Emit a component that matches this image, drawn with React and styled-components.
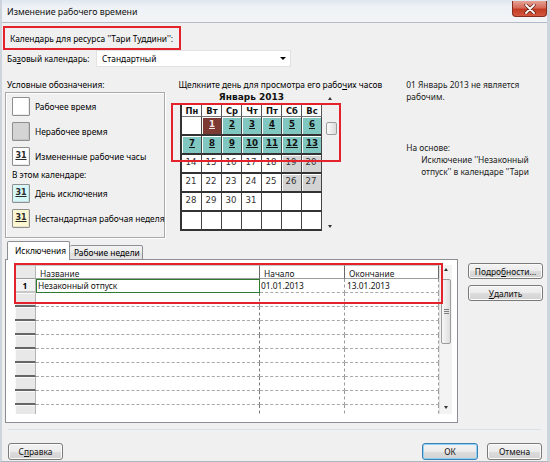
import React from 'react';
import styled, { createGlobalStyle } from 'styled-components';

const GlobalStyle = createGlobalStyle`
  html, body { margin: 0; padding: 0; background: #ffffff; }
  body {
    font-family: "Noto Sans", "Open Sans", sans-serif;
    font-size: 8.4px;
    color: #000;
  }
  #root { width: 550px; height: 462px; }
  * { box-sizing: border-box; }
`;

const Window = styled.div`
  width: 550px;
  height: 462px;
  display: flex;
  flex-direction: column;
  border-left: 2px solid #cdd4dc;
  border-right: 3px solid #cdd4dc;
  border-bottom: 1px solid #aeb6bf;
  overflow: hidden;
  background: #f0f0f0;
`;

const TitleBar = styled.div`
  height: 23px;
  flex: none;
  display: flex;
  justify-content: space-between;
  align-items: flex-start;
  padding-left: 5px;
  background: linear-gradient(180deg, #dfe6ee 0%, #eef2f6 30%, #f2f4f7 100%);
  border-bottom: 1px solid #b3bcc6;
`;

const TitleText = styled.div`
  line-height: 25px;
  font-size: 8.8px;
  color: #111;
`;

const CloseButton = styled.div`
  width: 35px;
  height: 16px;
  margin-top: 1px;
  display: flex;
  align-items: center;
  justify-content: center;
  border: 1px solid #8a2b22;
  border-top: none;
  border-radius: 0 0 4px 4px;
  background: linear-gradient(180deg, #e6a396 0%, #d66a58 45%, #c23b23 55%, #d3583f 100%);
`;

const Body = styled.div`
  flex: 1;
  display: flex;
  flex-direction: column;
  padding: 3px 4px 0 3px;
  background: #f0f0f0;
  white-space: nowrap;
`;

const ResourceLabel = styled.div`
  width: 178px;
  height: 24px;
  margin-left: -2px;
  padding-left: 5px;
  display: flex;
  align-items: center;
  border: 2px solid #e3222b;
`;

const BaseRow = styled.div`
  display: flex;
  align-items: center;
  height: 17px;
`;

const FieldLabel = styled.div`
  width: 91px;
  padding-left: 2px;
`;

const Select = styled.div`
  width: 195px;
  height: 17px;
  display: flex;
  align-items: center;
  justify-content: space-between;
  padding: 0 4px 0 5px;
  background: #fff;
  border: 1px solid #e2e2e2;
`;

const Caret = styled.span`
  width: 0;
  height: 0;
  border-left: 3px solid transparent;
  border-right: 3px solid transparent;
  border-top: 3px solid #000;
`;

const MainRow = styled.div`
  display: flex;
  margin-top: 12px;
`;

const LegendCol = styled.div`
  width: 162px;
  display: flex;
  flex-direction: column;
`;

const SectionLabel = styled.div`
  height: 12px;
  line-height: 12px;
  padding-left: ${p => (p.$flush ? 0 : 2)}px;
`;

const LegendBox = styled.div`
  margin-top: 1px;
  height: 146px;
  padding: 4px 0 6px 6px;
  display: flex;
  flex-direction: column;
  gap: 6px;
  border: 1px solid #a9a9a9;
  box-shadow: inset 1px 1px 0 #ffffff, 1px 1px 0 #ffffff;
`;

const LegendItem = styled.div`
  display: flex;
  align-items: center;
  gap: 5px;
  height: 19px;
`;

const swatchBg = { work: '#ffffff', off: '#d4d4d4', changed: '#ffffff', exception: '#d6f7f8', week: '#fbf7d3' };

const Swatch = styled.div`
  width: 18px;
  height: 19px;
  flex: none;
  display: flex;
  justify-content: center;
  padding-top: 3px;
  background: ${p => swatchBg[p.$kind]};
  border: 1px solid #8f8f8f;
  border-radius: 1px;
  box-shadow: inset -1px -1px 0 rgba(0,0,0,0.08);
  font-family: "DejaVu Sans", sans-serif;
  font-size: 8px;
  font-weight: bold;
  color: #2a2a2a;
  text-decoration: underline;
`;

const LegendSub = styled.div`
  height: 12px;
  line-height: 12px;
  margin-top: -3px;
  margin-bottom: -3px;
`;

const CalendarCol = styled.div`
  width: 233px;
  margin-left: 13px;
  display: flex;
  flex-direction: column;
`;

const CalendarWrap = styled.div`
  position: relative;
  display: flex;
  margin-left: 2px;
`;

const MonthBlock = styled.div`
  width: 142px;
  display: flex;
  flex-direction: column;
`;

const MonthTitle = styled.div`
  height: 14px;
  line-height: 12px;
  text-align: center;
  font-family: "DejaVu Sans", sans-serif;
  font-weight: bold;
  font-size: 9px;
  color: #111;
`;

const DayGrid = styled.div`
  display: grid;
  grid-template-columns: repeat(7, 20px);
  grid-template-rows: 12px repeat(6, 19px);
  border-left: 2px solid #333;
  background: #fff;
`;

const DayHead = styled.div`
  display: flex;
  justify-content: center;
  align-items: center;
  border-right: 1px solid #555;
  border-bottom: 1px solid #777;
  font-family: "DejaVu Sans", sans-serif;
  font-weight: bold;
  font-size: 8.4px;
  color: #111;
`;

const cellBg = { empty: '#ffffff', work: '#ffffff', weekend: '#d3d3d3', exception: '#80c6c1', selected: '#7d3a33' };
const marked = k => k === 'exception' || k === 'selected';

const DayCell = styled.div`
  display: flex;
  justify-content: center;
  padding-top: 2px;
  padding-right: ${p => (marked(p.$kind) ? 0 : 2)}px;
  background: ${p => cellBg[p.$kind]};
  border-right: 1px solid #444;
  border-bottom: 2px solid #333;
  box-shadow: inset 1px 1px 0 #ffffff;
  font-family: "DejaVu Sans", sans-serif;
  font-size: 8.6px;
  color: ${p => (p.$kind === 'selected' ? '#f4e6e4' : p.$kind === 'exception' ? '#111' : '#333')};
  font-weight: ${p => (marked(p.$kind) ? 'bold' : 'normal')};
  text-decoration: ${p => (marked(p.$kind) ? 'underline' : 'none')};
`;

const CalScroll = styled.div`
  width: 16px;
  height: 140px;
  margin-top: 1px;
  display: flex;
  flex-direction: column;
  align-items: center;
  padding: 5px 0 4px;
`;

const ArrowUp = styled.span`
  width: 0;
  height: 0;
  border-left: 2.5px solid transparent;
  border-right: 2.5px solid transparent;
  border-bottom: 3px solid #333;
`;

const ArrowDown = styled.span`
  width: 0;
  height: 0;
  margin-top: auto;
  border-left: 2.5px solid transparent;
  border-right: 2.5px solid transparent;
  border-top: 3px solid #333;
`;

const CalThumb = styled.div`
  width: 11px;
  height: 13px;
  margin-top: 22px;
  margin-left: 2px;
  border: 1px solid #9c9c9c;
  border-radius: 2px;
  background: linear-gradient(90deg, #fafafa, #dcdcdc);
`;

const Annotation = styled.div`
  position: absolute;
  left: ${p => p.$l}px;
  top: ${p => p.$t}px;
  width: ${p => p.$w}px;
  height: ${p => p.$h}px;
  border: 2px solid #e3222b;
  pointer-events: none;
`;

const InfoCol = styled.div`
  width: 140px;
  display: flex;
  flex-direction: column;
  line-height: 12px;
  color: #1a1a1a;
`;

const InfoLine = styled.div`
  height: 12px;
  margin-top: ${p => p.$mt || 0}px;
  padding-left: ${p => (p.$indent ? 15 : 0)}px;
`;

const TabsRow = styled.div`
  display: flex;
  align-items: flex-end;
  height: 18px;
  margin-top: 4px;
  padding-left: 2px;
  position: relative;
  z-index: 1;
  margin-bottom: -1px;
`;

const Tab = styled.div`
  height: ${p => (p.$active ? 19 : 15)}px;
  width: ${p => p.$w}px;
  padding-left: ${p => (p.$active ? 7 : 4)}px;
  padding-top: ${p => (p.$active ? 3 : 1)}px;
  border: 1px solid #8c8e94;
  border-bottom: ${p => (p.$active ? 'none' : '1px solid #8c8e94')};
  border-left: ${p => (p.$active ? '1px solid #8c8e94' : 'none')};
  border-radius: 2px 2px 0 0;
  background: ${p => (p.$active ? '#ffffff' : 'linear-gradient(180deg, #f3f3f3 0%, #ebebeb 50%, #dddddd 51%, #e5e5e5 100%)')};
`;

const ContentRow = styled.div`
  display: flex;
  align-items: flex-start;
`;

const Panel = styled.div`
  width: 453px;
  height: 164px;
  padding: 5px 0 0 9px;
  background: #fff;
  border: 1px solid #8c8e94;
`;

const TableWrap = styled.div`
  position: relative;
  display: flex;
  width: 437px;
  height: 149px;
`;

const Table = styled.div`
  display: grid;
  grid-template-columns: 21px 224px 85px 94px;
  grid-template-rows: 14px;
  grid-auto-rows: 14px;
  overflow: hidden;
  height: 149px;
  background: #fff;
`;

const HeadCell = styled.div`
  padding: 2px 0 0 4px;
  line-height: 11px;
  background: ${p => (p.$corner ? '#e9e9e9' : '#ffffff')};
  border-right: 1px solid ${p => (p.$corner ? '#b5b5b5' : '#6a6a6a')};
  border-bottom: 1px solid #9d9d9d;
  border-top: 1px solid #c9c9c9;
  color: #222;
`;

const RowHead = styled.div`
  display: flex;
  justify-content: center;
  align-items: center;
  font-weight: bold;
  background: ${p => (p.$first ? '#f2f2f2' : '#e8e8e8')};
  border-right: 1px solid #b5b5b5;
  border-bottom: 2px solid ${p => (p.$first ? '#c8c8c8' : '#666')};
  box-shadow: inset 1px 1px 0 #fafafa;
`;

const Cell = styled.div`
  padding-left: ${p => p.$pad}px;
  line-height: 13px;
  border-right: 1px dashed ${p => (p.$strong ? '#7a7a7a' : '#9a9a9a')};
  border-bottom: 1px dashed #a9a9a9;
  outline: ${p => (p.$selected ? '1px solid #2e7a33' : 'none')};
  outline-offset: -1px;
  color: #111;
`;

const TableScroll = styled.div`
  width: 13px;
  height: 149px;
  display: flex;
  flex-direction: column;
  align-items: center;
  padding: 3px 0 5px;
  background: #f3f3f3;
  border-left: 1px solid #e0e0e0;
`;

const TableThumb = styled.div`
  width: 10px;
  height: 65px;
  margin-top: 8px;
  display: flex;
  flex-direction: column;
  align-items: center;
  justify-content: center;
  gap: 1px;
  border: 1px solid #9c9c9c;
  border-radius: 2px;
  background: linear-gradient(90deg, #f7f7f7, #dedede);
`;

const Grip = styled.span`
  width: 5px;
  height: 1px;
  background: #7d7d7d;
`;

const SideButtons = styled.div`
  display: flex;
  flex-direction: column;
  gap: 6px;
  margin: 4px 0 0 10px;
`;

const Button = styled.div`
  width: ${p => p.$w}px;
  height: ${p => p.$h || 17}px;
  display: flex;
  align-items: center;
  justify-content: center;
  border: 1px solid ${p => (p.$default ? '#3b7fb5' : '#7a7a7a')};
  border-radius: 3px;
  background: linear-gradient(180deg, #f3f3f3 0%, #ebebeb 50%, #dddddd 51%, #d2d2d2 100%);
  box-shadow: inset 0 0 0 1px ${p => (p.$default ? '#8fd0f5' : '#fbfbfb')};
  color: #111;
`;

const Separator = styled.div`
  height: 1px;
  margin: 6px 2px 0 3px;
  background: #d8e0e8;
`;

const Footer = styled.div`
  display: flex;
  align-items: center;
  margin-top: 13px;
  padding: 0 1px 0 3px;
  gap: 9px;
`;

const Spacer = styled.div`
  flex: 1;
`;

const U = styled.span`
  text-decoration: underline;
`;

const calRows = [
  [null, 1, 2, 3, 4, 5, 6],
  [7, 8, 9, 10, 11, 12, 13],
  [14, 15, 16, 17, 18, 19, 20],
  [21, 22, 23, 24, 25, 26, 27],
  [28, 29, 30, 31, null, null, null],
  [null, null, null, null, null, null, null],
];

const dayKind = (d, col) => {
  if (d === null) return 'empty';
  if (d === 1) return 'selected';
  if (d >= 2 && d <= 13) return 'exception';
  if (col >= 5) return 'weekend';
  return 'work';
};

const dayNames = ['Пн', 'Вт', 'Ср', 'Чт', 'Пт', 'Сб', 'Вс'];

const tableRows = [
  { n: '1', name: 'Незаконный отпуск', start: '01.01.2013', end: '13.01.2013' },
  ...Array.from({ length: 9 }, () => ({ n: '', name: '', start: '', end: '' })),
];

export default function App() {
  return (
    <>
      <GlobalStyle />
      <Window>
        <TitleBar>
          <TitleText>Изменение рабочего времени</TitleText>
          <CloseButton>
            <svg width="12" height="10" viewBox="0 0 12 10">
              <path d="M2 1 L10 9 M10 1 L2 9" stroke="#5a1a12" strokeWidth="3.2" strokeLinecap="round" />
              <path d="M2 1 L10 9 M10 1 L2 9" stroke="#ffffff" strokeWidth="1.8" strokeLinecap="round" />
            </svg>
          </CloseButton>
        </TitleBar>
        <Body>
          <ResourceLabel>Календарь для ресурса ''Тари Туддини'':</ResourceLabel>
          <BaseRow>
            <FieldLabel>Ба<U>з</U>овый календарь:</FieldLabel>
            <Select>
              <span>Стандартный</span>
              <Caret />
            </Select>
          </BaseRow>
          <MainRow>
            <LegendCol>
              <SectionLabel>Условные обозначения:</SectionLabel>
              <LegendBox>
                <LegendItem><Swatch $kind="work" /><span>Рабочее время</span></LegendItem>
                <LegendItem><Swatch $kind="off" /><span>Нерабочее время</span></LegendItem>
                <LegendItem><Swatch $kind="changed">31</Swatch><span>Измененные рабочие часы</span></LegendItem>
                <LegendSub>В этом календаре:</LegendSub>
                <LegendItem><Swatch $kind="exception">31</Swatch><span>День исключения</span></LegendItem>
                <LegendItem><Swatch $kind="week">31</Swatch><span>Нестандартная рабочая неделя</span></LegendItem>
              </LegendBox>
            </LegendCol>
            <CalendarCol>
              <SectionLabel $flush>Щелкните день для просмотра его рабо<U>ч</U>их часов</SectionLabel>
              <CalendarWrap>
                <MonthBlock>
                  <MonthTitle>Январь 2013</MonthTitle>
                  <DayGrid>
                    {dayNames.map(n => <DayHead key={n}>{n}</DayHead>)}
                    {calRows.map((row, r) =>
                      row.map((d, c) => (
                        <DayCell key={`${r}-${c}`} $kind={dayKind(d, c)}>{d}</DayCell>
                      ))
                    )}
                  </DayGrid>
                </MonthBlock>
                <CalScroll>
                  <ArrowUp />
                  <CalThumb />
                  <ArrowDown />
                </CalScroll>
                <Annotation $l={-9} $t={12} $w={170} $h={59} />
              </CalendarWrap>
            </CalendarCol>
            <InfoCol>
              <InfoLine>01 Январь 2013 не является</InfoLine>
              <InfoLine>рабочим.</InfoLine>
              <InfoLine $mt={39}>На основе:</InfoLine>
              <InfoLine $indent>Исключение ''Незаконный</InfoLine>
              <InfoLine $indent>отпуск'' в календаре ''Тари</InfoLine>
            </InfoCol>
          </MainRow>
          <TabsRow>
            <Tab $active $w={63}>Исключения</Tab>
            <Tab $w={73}>Рабочие недели</Tab>
          </TabsRow>
          <ContentRow>
            <Panel>
              <TableWrap>
                <Table>
                  <HeadCell $corner />
                  <HeadCell>Название</HeadCell>
                  <HeadCell>Начало</HeadCell>
                  <HeadCell>Окончание</HeadCell>
                  {tableRows.map((row, i) => (
                    <React.Fragment key={i}>
                      <RowHead $first={i === 0}>{row.n}</RowHead>
                      <Cell $pad={2} $strong $selected={i === 0}>{row.name}</Cell>
                      <Cell $pad={1}>{row.start}</Cell>
                      <Cell $pad={2}>{row.end}</Cell>
                    </React.Fragment>
                  ))}
                </Table>
                <TableScroll>
                  <ArrowUp />
                  <TableThumb>
                    <Grip /><Grip /><Grip />
                  </TableThumb>
                  <ArrowDown />
                </TableScroll>
                <Annotation $l={-1} $t={-2} $w={429} $h={41} />
              </TableWrap>
            </Panel>
            <SideButtons>
              <Button $w={75} $h={16}>Подро<U>б</U>ности...</Button>
              <Button $w={75} $h={16}><U>У</U>далить</Button>
            </SideButtons>
          </ContentRow>
          <Separator />
          <Footer>
            <Button $w={55}>С<U>п</U>равка</Button>
            <Spacer />
            <Button $w={56} $default>ОК</Button>
            <Button $w={55}>Отмена</Button>
          </Footer>
        </Body>
      </Window>
    </>
  );
}
